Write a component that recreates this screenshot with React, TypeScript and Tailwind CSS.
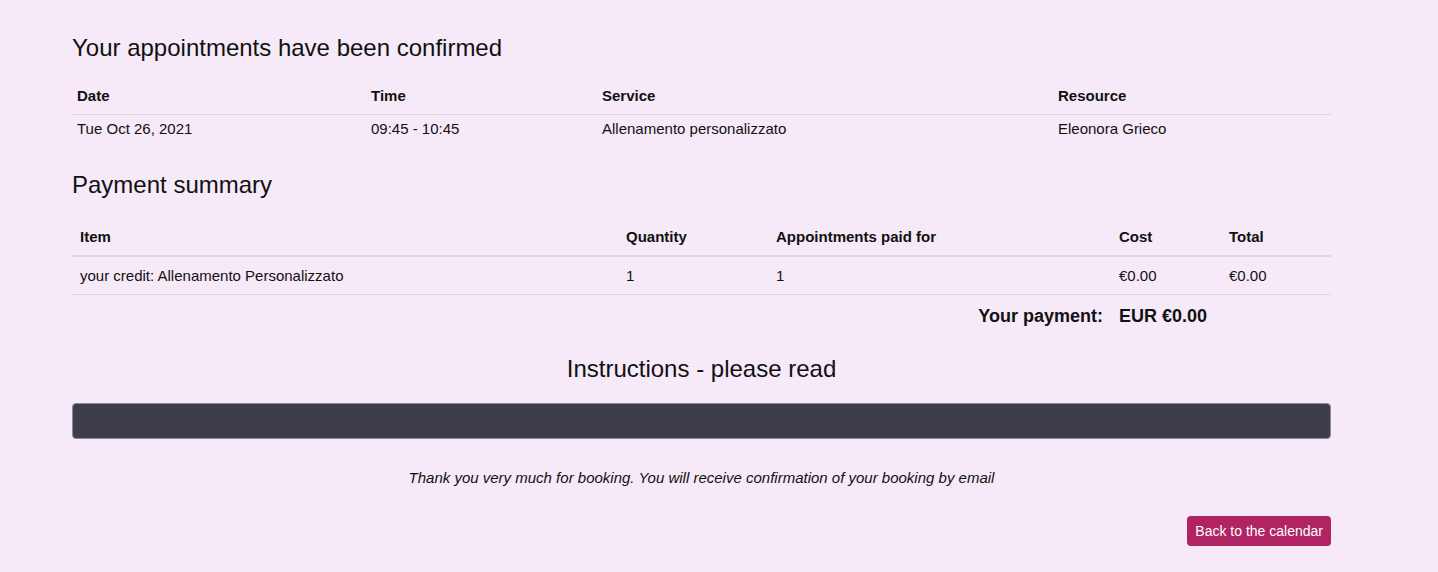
import React from "react";

export default function App() {
  const font = { fontFamily: '"Liberation Sans", Arial, Helvetica, sans-serif' };
  return (
    <div className="min-h-[572px] w-full bg-[#f6e9f8] text-[#111] text-[15px]" style={font}>
      <div className="mx-[72px] w-[1259px] pt-[34px]">
        <h2 className="text-[24px] leading-[28px] font-normal">Your appointments have been confirmed</h2>
        <table className="mt-[25px] w-full border-collapse">
          <thead>
            <tr className="border-b border-[#dcd6de]">
              <th className="w-[294px] text-left font-bold px-[5px] pb-[9px] pt-0 leading-[18px]">Date</th>
              <th className="w-[231px] text-left font-bold px-[5px] pb-[9px] pt-0 leading-[18px]">Time</th>
              <th className="w-[456px] text-left font-bold px-[5px] pb-[9px] pt-0 leading-[18px]">Service</th>
              <th className="text-left font-bold px-[5px] pb-[9px] pt-0 leading-[18px]">Resource</th>
            </tr>
          </thead>
          <tbody>
            <tr>
              <td className="px-[5px] pt-[5px] pb-[5px] leading-[18px]">Tue Oct 26, 2021</td>
              <td className="px-[5px] pt-[5px] pb-[5px] leading-[18px]">09:45 - 10:45</td>
              <td className="px-[5px] pt-[5px] pb-[5px] leading-[18px]">Allenamento personalizzato</td>
              <td className="px-[5px] pt-[5px] pb-[5px] leading-[18px]">Eleonora Grieco</td>
            </tr>
          </tbody>
        </table>

        <h2 className="mt-[28px] text-[24px] leading-[28px] font-normal">Payment summary</h2>
        <table className="mt-[20px] w-full border-collapse">
          <thead>
            <tr className="border-b-2 border-[#dcd6de]">
              <th className="w-[546px] text-left font-bold px-[8px] py-[9px] leading-[18px]">Item</th>
              <th className="w-[150px] text-left font-bold px-[8px] py-[9px] leading-[18px]">Quantity</th>
              <th className="w-[343px] text-left font-bold px-[8px] py-[9px] leading-[18px]">Appointments paid for</th>
              <th className="w-[110px] text-left font-bold px-[8px] py-[9px] leading-[18px]">Cost</th>
              <th className="text-left font-bold px-[8px] py-[9px] leading-[18px]">Total</th>
            </tr>
          </thead>
          <tbody>
            <tr className="border-b border-[#dcd6de]">
              <td className="px-[8px] pt-[10px] pb-[9px] leading-[18px]">your credit: Allenamento Personalizzato</td>
              <td className="px-[8px] pt-[10px] pb-[9px] leading-[18px]">1</td>
              <td className="px-[8px] pt-[10px] pb-[9px] leading-[18px]">1</td>
              <td className="px-[8px] pt-[10px] pb-[9px] leading-[18px]">€0.00</td>
              <td className="px-[8px] pt-[10px] pb-[9px] leading-[18px]">€0.00</td>
            </tr>
            <tr>
              <td colSpan={3} className="text-right font-bold text-[18px] px-[8px] pt-[10px] pb-[10px] leading-[22px]">Your payment:</td>
              <td colSpan={2} className="text-left font-bold text-[18px] px-[8px] pt-[10px] pb-[10px] leading-[22px]">EUR €0.00</td>
            </tr>
          </tbody>
        </table>

        <h2 className="mt-[18px] text-center text-[24px] leading-[28px] font-normal">Instructions - please read</h2>
        <div className="mt-[20px] h-[36px] rounded-[4px] border border-[#8d8c96] bg-[#3e3d4c]"></div>

        <p className="mt-[30px] text-center italic text-[15px] leading-[18px]">
          Thank you very much for booking. You will receive confirmation of your booking by email
        </p>

        <div className="mt-[29px] flex justify-end">
          <button className="h-[30px] rounded-[4px] bg-[#b12463] px-[8px] text-[14px] leading-[17px] text-white">
            Back to the calendar
          </button>
        </div>
      </div>
    </div>
  );
}
